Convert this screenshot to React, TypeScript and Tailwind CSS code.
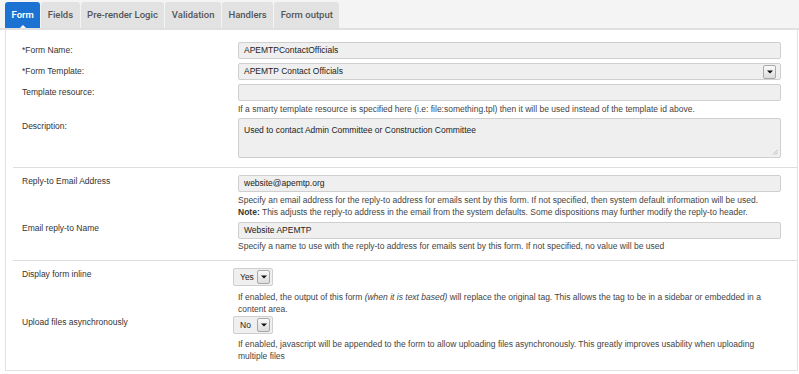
import type { ReactNode } from "react";

const tabs = ["Form", "Fields", "Pre-render Logic", "Validation", "Handlers", "Form output"];

function Arrow() {
  return (
    <span className="flex h-[14px] w-[13px] shrink-0 items-center justify-center rounded-[2px] border border-[#a9a9a9] bg-gradient-to-b from-[#fafafa] to-[#dcdcdc]">
      <svg width="6" height="4" viewBox="0 0 6 4">
        <path d="M0 0.5h6L3 3.5z" fill="#111" />
      </svg>
    </span>
  );
}

function Input({ value, select }: { value?: string; select?: boolean }) {
  return (
    <div className="flex h-[17px] w-[543px] items-center justify-between rounded-[2px] border border-[#cfcfcf] bg-[#efefef] pl-[5px] pr-[4px] text-[#222]">
      <span>{value}</span>
      {select && <Arrow />}
    </div>
  );
}

function SmallSelect({ value }: { value: string }) {
  return (
    <div className="-ml-[5px] flex h-[18px] w-[40px] items-center justify-between rounded-[2px] border border-[#cfcfcf] bg-[#efefef] pl-[6px] pr-[2px] text-[#222]">
      <span>{value}</span>
      <Arrow />
    </div>
  );
}

function Row({ label, children, lift = false, className = "" }: { label: string; children: ReactNode; lift?: boolean; className?: string }) {
  return (
    <div className={`flex ${className}`}>
      <div className={`w-[216px] shrink-0 leading-[12px] text-[#333] ${lift ? "pt-0" : "pt-[2px]"}`}>{label}</div>
      <div className="flex w-[543px] flex-col">{children}</div>
    </div>
  );
}

function Help({ children }: { children: ReactNode }) {
  return <p className="max-w-[540px] leading-[12px] text-[#444]">{children}</p>;
}

export default function App() {
  return (
    <div className="h-[374px] w-[799px] overflow-hidden bg-white font-['Liberation_Sans',Arial,sans-serif] text-[8.5px]">
      {/* tab strip */}
      <div className="flex h-[30px] items-end gap-px border-b-2 border-[#e0e0e0] bg-[#f4f4f4] pl-[5px]">
        {tabs.map((t, i) => (
          <div
            key={t}
            className={`relative flex h-[26px] items-center rounded-t-[3px] px-[6.5px] font-['Roboto',sans-serif] text-[9.5px] font-medium ${
              i === 0 ? "bg-[#1c72d3] font-semibold text-white" : "bg-[#e2e2e2] text-[#555]"
            }`}
          >
            {t}
            {i === 0 && (
              <span className="absolute bottom-0 left-1/2 h-0 w-0 -translate-x-1/2 border-x-[3px] border-b-[3px] border-x-transparent border-b-white" />
            )}
          </div>
        ))}
      </div>

      {/* panel */}
      <div className="ml-[5px] h-[341px] w-[793px] border-x border-b border-[#e2e2e2] pl-[16px]">
        {/* general */}
        <div className="flex flex-col gap-[4px] pb-[9px] pt-[12px]">
          <Row label="*Form Name:">
            <Input value="APEMTPContactOfficials" />
          </Row>
          <Row label="*Form Template:">
            <Input value="APEMTP Contact Officials" select />
          </Row>
          <Row label="Template resource:">
            <Input />
            <div className="mt-[2px]">
              <Help>
                If a smarty template resource is specified here (i.e: file:something.tpl) then it will be used instead of the template id above.
              </Help>
            </div>
          </Row>
          <Row label="Description:" className="-mt-px">
            <div className="relative h-[40px] w-[543px] rounded-[2px] border border-[#cfcfcf] bg-[#efefef] px-[5px] pt-[5px] text-[#222]">
              Used to contact Admin Committee or Construction Committee
              <svg className="absolute bottom-[2px] right-[2px]" width="6" height="6" viewBox="0 0 6 6">
                <path d="M5.5 1L1 5.5M5.5 3.5L3.5 5.5" stroke="#aaa" strokeWidth="0.8" />
              </svg>
            </div>
          </Row>
        </div>

        <div className="-ml-[9px] h-px bg-[#dedede]" />

        {/* reply-to */}
        <div className="flex flex-col gap-[4px] pb-[8px] pt-[7px]">
          <Row label="Reply-to Email Address" lift>
            <Input value="website@apemtp.org" />
            <div className="mt-[2px]">
              <Help>
                Specify an email address for the reply-to address for emails sent by this form. If not specified, then system default information will be used.
              </Help>
              <Help>
                <b className="text-[#333]">Note:</b> This adjusts the reply-to address in the email from the system defaults. Some dispositions may further modify the reply-to header.
              </Help>
            </div>
          </Row>
          <Row label="Email reply-to Name" lift>
            <Input value="Website APEMTP" />
            <div className="mt-[1px]">
              <Help>Specify a name to use with the reply-to address for emails sent by this form. If not specified, no value will be used</Help>
            </div>
          </Row>
        </div>

        <div className="-ml-[9px] h-px bg-[#dedede]" />

        {/* display */}
        <div className="flex flex-col gap-[1px] pt-[7px]">
          <Row label="Display form inline" lift>
            <SmallSelect value="Yes" />
            <div className="mt-[5px]">
              <Help>
                If enabled, the output of this form <i>(when it is text based)</i> will replace the original tag. This allows the tag to be in a sidebar or embedded in a content area.
              </Help>
            </div>
          </Row>
          <Row label="Upload files asynchronously" lift>
            <SmallSelect value="No" />
            <div className="mt-[4px]">
              <Help>
                If enabled, javascript will be appended to the form to allow uploading files asynchronously. This greatly improves usability when uploading multiple files
              </Help>
            </div>
          </Row>
        </div>
      </div>
    </div>
  );
}
